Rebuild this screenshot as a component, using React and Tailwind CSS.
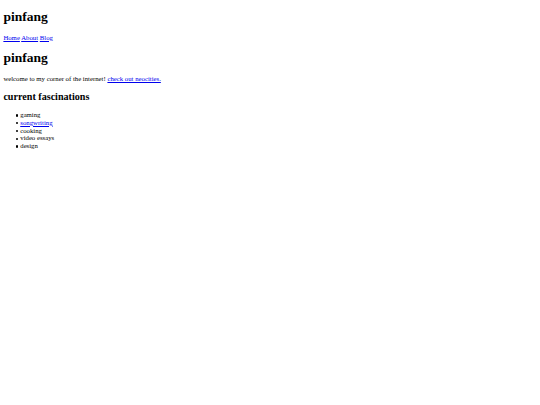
import React from 'react';

const Link = ({ children }) => (
    <a href="#" className="text-[#0000ee] underline">
        {children}
    </a>
);

export default function App() {
    const fascinations = ['gaming', 'songwriting', 'cooking', 'video essays', 'design'];

    return (
        <div className="min-h-[405px] bg-white text-black font-['Liberation_Serif',serif] text-[6.75px] leading-[1.15] px-[3.375px] flow-root">
            <h1 className="text-[13.5px] font-bold my-[9.05px]">pinfang</h1>
            <p className="my-[6.75px]">
                <Link>Home</Link> <Link>About</Link> <Link>Blog</Link>
            </p>

            <h1 className="text-[13.5px] font-bold my-[9.05px]">pinfang</h1>
            <p className="my-[6.75px]">
                welcome to my corner of the internet! <Link>check out neocities.</Link>
            </p>

            <h2 className="text-[10.125px] font-bold my-[8.4px]">current fascinations</h2>
            <ul className="pl-[12.4px] my-[6.75px]">
                {fascinations.map(item => (
                    <li key={item} className="flex items-center">
                        <span className="w-[2.3px] h-[2.3px] rounded-full bg-black mr-[2.2px] mt-[1px] shrink-0" />
                        {item === 'songwriting' ? <Link>{item}</Link> : <span>{item}</span>}
                    </li>
                ))}
            </ul>
        </div>
    );
}
